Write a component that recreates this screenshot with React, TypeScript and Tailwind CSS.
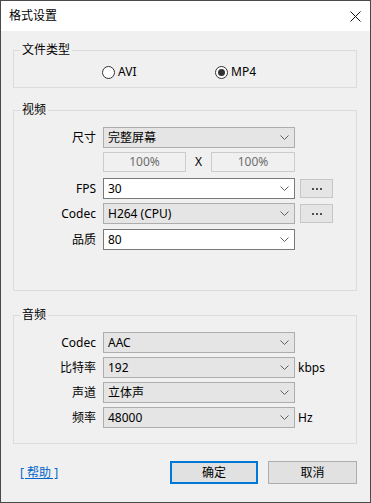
import type { ReactNode } from 'react';

const FONT = { fontFamily: '"Noto Sans", "Noto Sans CJK SC", sans-serif' };

function Chevron() {
  return (
    <svg width="9" height="5" viewBox="0 0 9 5" className="shrink-0">
      <path d="M0.5 0.5 L4.5 4.5 L8.5 0.5" fill="none" stroke="#606060" strokeWidth="1" />
    </svg>
  );
}

function Combo({ value, white = false }: { value: string; white?: boolean }) {
  return (
    <div
      className={`flex items-center justify-between w-[192px] h-[21px] pl-[4px] pr-[5px] border ${
        white ? 'bg-white border-[#7a7a7a]' : 'bg-[#e5e5e5] border-[#adadad]'
      }`}
    >
      <span className="leading-[16px]">{value}</span>
      <Chevron />
    </div>
  );
}

function MoreButton() {
  return (
    <div className="flex items-center justify-center gap-[2px] w-[33px] h-[19px] bg-[#e5e5e5] border border-[#c6c6c6]">
      <span className="w-[2px] h-[2px] bg-[#505050]" />
      <span className="w-[2px] h-[2px] bg-[#505050]" />
      <span className="w-[2px] h-[2px] bg-[#505050]" />
    </div>
  );
}

function Row({ label, children, className = '' }: { label: string; children: ReactNode; className?: string }) {
  return (
    <div className={`flex items-center ${className}`}>
      <div className="w-[83px] text-right pr-[1px] leading-[16px]">{label}</div>
      <div className="flex items-center ml-[6px]">{children}</div>
    </div>
  );
}

function Group({ title, children, className = '' }: { title: string; children: ReactNode; className?: string }) {
  return (
    <fieldset className={`w-[344px] ml-[12px] border border-[#dcdcdc] ${className}`}>
      <legend className="ml-[6px] px-[2px] leading-[16px]">{title}</legend>
      {children}
    </fieldset>
  );
}

function Radio({ label, checked = false }: { label: string; checked?: boolean }) {
  return (
    <div className="flex items-center gap-[3px]">
      <div className="w-[13px] h-[13px] rounded-full border border-[#333333] bg-white flex items-center justify-center">
        {checked && <div className="w-[7px] h-[7px] rounded-full bg-[#333333]" />}
      </div>
      <span className="leading-[16px]">{label}</span>
    </div>
  );
}

export default function App() {
  return (
    <div
      className="w-[371px] h-[503px] border border-[#4a4a4a] bg-[#f0f0f0] flex flex-col text-[12px] text-black"
      style={FONT}
    >
      {/* Title bar */}
      <div className="h-[30px] bg-white flex items-center justify-between pl-[8px] pr-[9px]">
        <span>格式设置</span>
        <svg width="11" height="11" viewBox="0 0 11 11">
          <path d="M0.5 0.5 L10.5 10.5 M10.5 0.5 L0.5 10.5" stroke="#111" strokeWidth="1" />
        </svg>
      </div>

      {/* 文件类型 */}
      <Group title="文件类型" className="mt-[11px] pb-[7px]">
        <div className="flex items-center mt-[6px] pl-[88px]">
          <div className="w-[113px]">
            <Radio label="AVI" />
          </div>
          <Radio label="MP4" checked />
        </div>
      </Group>

      {/* 视频 */}
      <Group title="视频" className="mt-[14px] pb-[40px]">
        <Row label="尺寸" className="mt-[9px]">
          <Combo value="完整屏幕" />
        </Row>
        <Row label="" className="mt-[4px]">
          <div className="w-[83px] h-[20px] border border-[#cccccc] bg-[#f0f0f0] text-[#6d6d6d] flex items-center justify-center">
            100%
          </div>
          <div className="w-[25px] text-center">X</div>
          <div className="w-[84px] h-[20px] border border-[#cccccc] bg-[#f0f0f0] text-[#6d6d6d] flex items-center justify-center">
            100%
          </div>
        </Row>
        <Row label="FPS" className="mt-[6px]">
          <Combo value="30" white />
          <div className="ml-[5px]">
            <MoreButton />
          </div>
        </Row>
        <Row label="Codec" className="mt-[4px]">
          <Combo value="H264 (CPU)" />
          <div className="ml-[5px]">
            <MoreButton />
          </div>
        </Row>
        <Row label="品质" className="mt-[5px]">
          <Combo value="80" white />
        </Row>
      </Group>

      {/* 音频 */}
      <Group title="音频" className="mt-[16px] pb-[15px]">
        <Row label="Codec" className="mt-[9px]">
          <Combo value="AAC" />
        </Row>
        <Row label="比特率" className="mt-[4px]">
          <Combo value="192" />
          <span className="ml-[3px]">kbps</span>
        </Row>
        <Row label="声道" className="mt-[4px]">
          <Combo value="立体声" />
        </Row>
        <Row label="频率" className="mt-[4px]">
          <Combo value="48000" />
          <span className="ml-[3px]">Hz</span>
        </Row>
      </Group>

      {/* Footer */}
      <div className="flex items-center mt-[17px] pl-[19px] pr-[13px]">
        <a className="text-[#0066cc] underline leading-[16px]">[ 帮助 ]</a>
        <div className="ml-auto flex gap-[10px]">
          <button className="w-[88px] h-[23px] border-2 border-[#0078d7] bg-[#e1e1e1] leading-none">确定</button>
          <button className="w-[89px] h-[23px] border border-[#adadad] bg-[#e1e1e1] leading-none">取消</button>
        </div>
      </div>
    </div>
  );
}
